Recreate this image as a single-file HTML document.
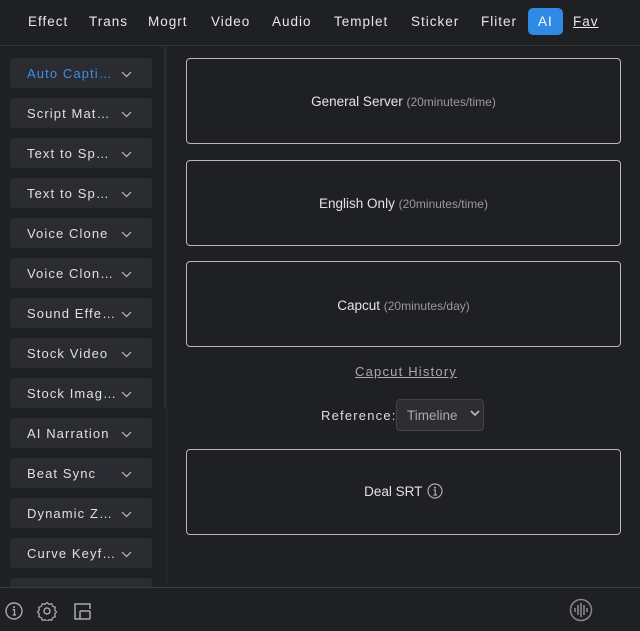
<!DOCTYPE html>
<html><head><style>
body{margin:0;width:640px;height:630px;background:#1f2023;font-family:"Liberation Sans",sans-serif;overflow:hidden;position:relative;color:#e6e6e6}
.nav{position:absolute;top:0;left:0;width:640px;height:45px;border-bottom:1px solid #333539;background:#1f2023}
.nav span{position:absolute;top:14px;font-size:13.5px;letter-spacing:1px;color:#e8e8e8}
.ai{position:absolute;left:528px;top:8px;width:35px;height:27px;background:#2f8ae5;border-radius:5px}
.sb{position:absolute;left:10px;width:142px;height:30px;background:#2a2c31;border-radius:3px;font-size:13px;letter-spacing:1.1px;color:#e0e0e0}
.sb span{position:absolute;left:17px;top:8px}
.card{position:absolute;left:186px;width:435px;height:86px;border:1px solid #b8b8b8;border-radius:4px;box-sizing:border-box;text-align:center;font-size:13.5px;color:#e4e4e4}
.card small{font-size:12px;color:#9a9a9a}
</style></head><body>
<div class="nav">
<span style="left:28px">Effect</span><span style="left:89px">Trans</span><span style="left:148px">Mogrt</span><span style="left:211px">Video</span><span style="left:272px">Audio</span><span style="left:334px">Templet</span><span style="left:411px">Sticker</span><span style="left:481px">Fliter</span>
<div class="ai"></div><span style="left:538px;color:#fff">AI</span><span style="left:573px;text-decoration:underline">Fav</span>
</div>
<div style="position:absolute;left:164px;top:47px;width:3px;height:360px;background:#2b2d31"></div>
<div style="position:absolute;left:166px;top:47px;width:1px;height:540px;background:#2a2b2e"></div>
<div style="position:absolute;left:0;top:47px;width:164px;height:540px;overflow:hidden">
<div class="sb" style="top:11px;color:#3d8fe6"><span>Auto Capti…</span></div>
<div class="sb" style="top:51px"><span>Script Mat…</span></div>
<div class="sb" style="top:91px"><span>Text to Sp…</span></div>
<div class="sb" style="top:131px"><span>Text to Sp…</span></div>
<div class="sb" style="top:171px"><span>Voice Clone</span></div>
<div class="sb" style="top:211px"><span>Voice Clon…</span></div>
<div class="sb" style="top:251px"><span>Sound Effe…</span></div>
<div class="sb" style="top:291px"><span>Stock Video</span></div>
<div class="sb" style="top:331px"><span>Stock Imag…</span></div>
<div class="sb" style="top:371px"><span>AI Narration</span></div>
<div class="sb" style="top:411px"><span>Beat Sync</span></div>
<div class="sb" style="top:451px"><span>Dynamic Z…</span></div>
<div class="sb" style="top:491px"><span>Curve Keyf…</span></div>
<div class="sb" style="top:531px"></div>
</div>
<svg width="0" height="0" style="position:absolute"><defs><path id="ch" d="M1 1l4.5 4.5 4.5-4.5" fill="none" stroke="#bbb" stroke-width="1.2"/></defs></svg>
<svg style="position:absolute;left:121px;top:71px" width="12" height="400"><use href="#ch"/><use href="#ch" y="40"/><use href="#ch" y="80"/><use href="#ch" y="120"/><use href="#ch" y="160"/><use href="#ch" y="200"/><use href="#ch" y="240"/><use href="#ch" y="280"/><use href="#ch" y="320"/><use href="#ch" y="360"/></svg>
<svg style="position:absolute;left:121px;top:471px" width="12" height="100"><use href="#ch"/><use href="#ch" y="40"/><use href="#ch" y="80"/></svg>
<div class="card" style="top:58px;line-height:86px">General Server <small>(20minutes/time)</small></div>
<div class="card" style="top:160px;line-height:86px">English Only <small>(20minutes/time)</small></div>
<div class="card" style="top:261px;line-height:87px">Capcut <small>(20minutes/day)</small></div>
<div style="position:absolute;left:355px;top:364px;font-size:13px;letter-spacing:1.2px;color:#aaa;text-decoration:underline">Capcut History</div>
<div style="position:absolute;left:321px;top:408px;font-size:13px;letter-spacing:1.2px;color:#ddd">Reference:</div>
<div style="position:absolute;left:396px;top:399px;width:88px;height:32px;background:#2c2e33;border:1px solid #444;border-radius:4px;box-sizing:border-box;font-size:13.5px;color:#aaa;padding:8px 0 0 10px">Timeline</div>
<svg style="position:absolute;left:470px;top:410px" width="10" height="8"><path d="M1 1l4 4 4-4" fill="none" stroke="#bbb" stroke-width="1.6"/></svg>
<div class="card" style="top:449px;height:86px;line-height:84px">Deal SRT <svg width="16" height="16" style="vertical-align:-3px;margin-left:1px" viewBox="0 0 16 16"><circle cx="8" cy="8" r="7" fill="none" stroke="#aaa" stroke-width="1.2"/><circle cx="8" cy="4.6" r="1" fill="#aaa"/><path d="M6.5 7h1.8v5M6.5 12h3.5" stroke="#aaa" stroke-width="1.2" fill="none"/></svg></div>
<div style="position:absolute;left:0;top:587px;width:640px;height:43px;border-top:1px solid #3a3b3f;background:#1f2023"></div>
<svg style="position:absolute;left:5px;top:601px" width="90" height="20" viewBox="0 0 90 20">
<circle cx="9" cy="10" r="8" fill="none" stroke="#aaa" stroke-width="1.4"/><circle cx="9" cy="6" r="1" fill="#aaa"/><path d="M7.5 8.5h2v5.5M7.5 14h3.5" stroke="#aaa" stroke-width="1.3" fill="none"/>
<circle cx="42" cy="10" r="3" fill="none" stroke="#aaa" stroke-width="1.4"/><path d="M42 1.5l2 1.8 2.7-.6 1 2.6 2.6 1-.6 2.7 1.8 2-1.8 2 .6 2.7-2.6 1-1 2.6-2.7-.6-2 1.8-2-1.8-2.7.6-1-2.6-2.6-1 .6-2.7-1.8-2 1.8-2-.6-2.7 2.6-1 1-2.6 2.7.6z" fill="none" stroke="#aaa" stroke-width="1.3"/>
<path d="M75 18h-5V3h15v5" fill="none" stroke="#aaa" stroke-width="1.5"/><rect x="75" y="10" width="10" height="8" rx="1" fill="none" stroke="#aaa" stroke-width="1.5"/>
</svg>
<svg style="position:absolute;left:569px;top:598px" width="24" height="24" viewBox="0 0 24 24"><circle cx="12" cy="12" r="10.5" fill="none" stroke="#888" stroke-width="1.5"/><path d="M6 10v4M9 7v10M12 5v14M15 7v10M18 10v4" stroke="#888" stroke-width="1.6"/></svg>
</body></html>
